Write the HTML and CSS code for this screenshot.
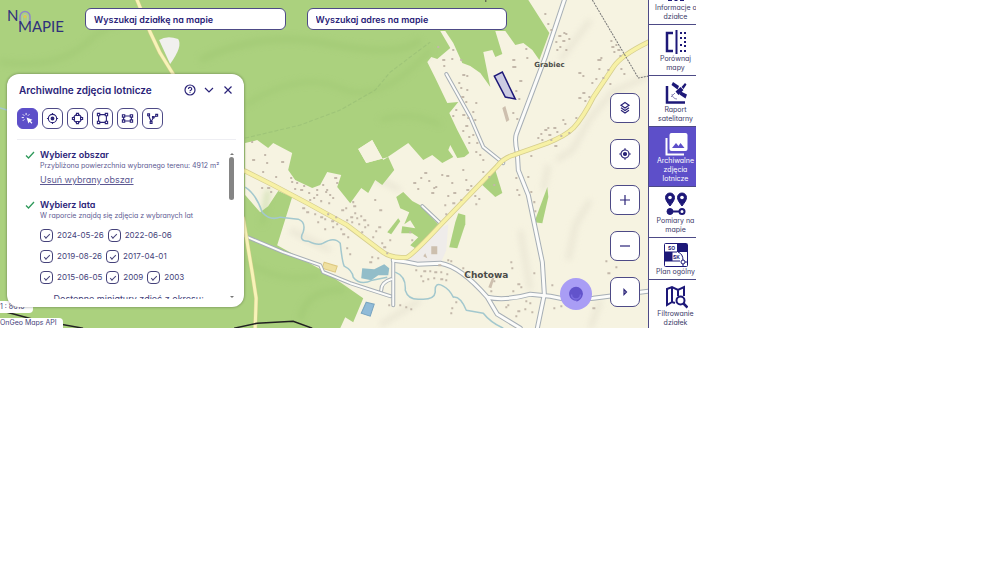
FILE: index.html
```html
<!DOCTYPE html>
<html lang="pl">
<head>
  <meta charset="UTF-8" />
  <meta name="viewport" content="width=device-width, initial-scale=1.0" />
  <title>Na Mapie</title>
  <link rel="stylesheet" href="styles.css">
</head>
<body>
  <div class="app">
    <main class="map">
      <svg class="map-canvas" viewBox="0 0 648 328" preserveAspectRatio="xMinYMin slice" aria-hidden="true">
        <defs>
          <filter id="soft" x="-20%" y="-20%" width="140%" height="140%"><feGaussianBlur stdDeviation="3" /></filter>
        </defs>
        <rect width="648" height="328" fill="#f6f3e1" />
        <!-- hill shading -->
        <g fill="none" stroke="#e6e2d0" stroke-width="5" filter="url(#soft)" opacity="0.8">
          <path d="M648 76L612 92 590 118 572 150 556 160" />
          <path d="M590 200L575 225 568 260M548 165L543 190M600 300L590 328M520 230L530 290" />
          <path d="M400 190L350 165M290 230L330 250M560 60L590 20M420 300L380 325" />
        </g>
        <!-- forests -->
        <g fill="#abd17e">
          <path d="M0 0H528L549 33 539 60 532 50 523 43 515 45 505 31H495L502 54 495 57 492 50 483 52 490 87 480 73 470 66 462 63 453 43 445 31H440L450 48 437 59 431 57 427 62 435 78 447 103 458 102 449 113 457 130 469 153 464 157 457 158 450 145 448 150 453 157 442 163 432 155 423 160 408 143 383 160 372 140 358 149 366 163 388 157 394 170 382 185 375 180 368 193 361 188 350 203 337 187 341 175 327 172 320 185 312 188 295 180 288 170 292 153 273 143 268 148 257 140 245 143V195L260 212 268 206 278 191 292 197 277 245 322 270 340 282 363 298 353 322 345 317 340 328H0Z" />
          <path d="M403 192L396 197 400 208 409 212 404 224 410 220 415 228 402 226 401 233 412 233 418 237 410 245 415 248 439 225 420 205 412 201Z" />
          <path d="M387 232L398 218 400 221 391 234Z" />
          <path d="M458 213L465 215 465 224 457 248 449 247 455 222Z" />
          <path d="M482 185L495 170 502 193 495 197Z" />
          <path d="M547 187L548 197 542 223 534 222Z" />
        </g>
        <path d="M366 163L388 157 383 160 372 140 358 149Z" fill="#f6f3e1" />
        <g fill="none" stroke="#9bc46f" filter="url(#soft)" opacity="0.5">
          <path d="M0 62Q60 70 90 40T200 20" stroke-width="5" />
          <path d="M200 60Q260 30 330 44T420 40" stroke-width="6" />
          <path d="M245 105Q300 70 340 88T430 50" stroke-width="4" />
          <path d="M300 320Q305 288 345 290" stroke-width="5" />
          <path d="M245 260Q280 285 320 275M268 190L262 225M380 120Q410 110 440 125" stroke-width="4" />
        </g>
        <path d="M245 138L300 125 340 110 375 90 390 72 430 42" fill="none" stroke="#92b873" stroke-width="1" stroke-dasharray="4 2" opacity="0.5" />
        <path d="M159 40Q167 35 178 39 183 46 170 64Z" fill="#f1f0ee" />
        <path d="M440 228L448 224 446 250 440 264 408 264 405 258 420 247Z" fill="#efecea" />
        <path d="M324 262L337 266 335 272 322 268Z" fill="#efe0a0" stroke="#ddc880" />
        <!-- water -->
        <g fill="none" stroke="#a3c8ce" stroke-width="1.5" stroke-linejoin="round">
          <path d="M0 108L7 110M245 187Q256 194 262 212 270 221 280 217L298 219Q306 222 303 232 298 241 308 241 318 246 323 243 334 236 340 243 342 262 344 266 352 270 353 277 360 286 372 280L387 277" />
          <path d="M395 272Q406 276 405 290 408 300 420 299 434 300 435 292 434 281 443 286 449 289 453 297 460 296 466 310L483 313Q490 322 503 328" />
        </g>
        <path d="M362 268L374 269 384 264 389 268 388 275 378 275 371 280 361 278Z" fill="#92bdc9" />
        <path d="M366 302L374 304 370 316 361 313Z" fill="#90bbd8" stroke="#78a4c0" />
        <!-- local roads: casing, then fill -->
        <g fill="none" stroke-linejoin="round" stroke-linecap="round">
          <g stroke="#a6aeb5" stroke-width="5">
            <path d="M564 0L545 57 516 134Q514 140 517 153L518 170 528 195 542 262 544 294 537 328" />
            <path d="M245 236L283 252 320 265 323 272 350 283 390 296M393 258V305M381 290Q381 282 391 279" stroke-width="4" />
            <path d="M393 260Q405 261 417 264L440 263Q460 266 487 297 505 301 530 294L550 296 570 300 593 298 648 291M487 297L497 314 520 328" />
            <path d="M446 74L470 117 483 147 503 163M422 206L440 223" stroke-width="4" />
          </g>
          <g stroke="#fcfcfa" stroke-width="3">
            <path d="M564 0L545 57 516 134Q514 140 517 153L518 170 528 195 542 262 544 294 537 328" />
            <path d="M245 236L283 252 320 265 323 272 350 283 390 296M393 258V305M381 290Q381 282 391 279" stroke-width="2" />
            <path d="M393 260Q405 261 417 264L440 263Q460 266 487 297 505 301 530 294L550 296 570 300 593 298 648 291M487 297L497 314 520 328" />
            <path d="M446 74L470 117 483 147 503 163M422 206L440 223" stroke-width="2" />
          </g>
          <path d="M245 171L273 185 307 203 347 225 380 250Q390 259 407 257 414 253 440 225L497 166Q503 158 513 155L547 143Q565 136 573 128 583 117 593 97L613 67Q621 55 648 42" stroke="#d5cd8e" stroke-width="5" />
          <path d="M245 171L273 185 307 203 347 225 380 250Q390 259 407 257 414 253 440 225L497 166Q503 158 513 155L547 143Q565 136 573 128 583 117 593 97L613 67Q621 55 648 42" stroke="#f7f1a5" stroke-width="3.5" />
          <path d="M137 0L150 32 160 53 173 74M243 218L252 272 256 298 255 328" stroke="#d6d08e" stroke-width="4" />
          <path d="M137 0L150 32 160 53 173 74M243 218L252 272 256 298 255 328" stroke="#f8f3b8" stroke-width="3" />
        </g>
        <!-- buildings -->
        <g fill="none" stroke="#c3b8aa" stroke-width="2">
          <path d="M251 142h2M252 160h3M264 155h2M266 163h2M281 162h3M262 172h2M261 188h2M267 188h3M270 192h2M275 177h2M290 178h2M291 182h2M294 189h2M296 183h2M300 190h3M303 186h2M302 208h3M306 212h3M308 193h2M309 200h2M313 198h2M316 190h2M316 195h2M320 201h2M325 192h2M328 203h2M329 195h2M332 198h2M334 178h3M336 183h2M326 190h2M322 185h2M341 210h3M345 208h2" />
          <path d="M314 214h2M317 222h2M320 217h3M324 219h2M324 229h2M327 214h2M331 221h3M332 227h2M335 217h2M336 224h2M340 229h2M342 234h3M346 220h2M347 237h2M350 217h3M351 222h2M353 206h3M354 213h2M356 218h2M358 224h2M360 216h2M361 232h2M363 220h3M364 227h2M367 225h2M372 237h2M375 231h2M378 227h3M381 243h2M383 247h3M389 240h2M374 200h2M379 210h3M352 202h2M346 248h2M349 254h2M371 257h2M369 262h3M377 258h2M386 253h2" />
          <path d="M413 183h3M417 189h2M420 178h2M424 173h3M428 181h2M433 188h2M431 193h3M435 187h2M441 175h2M446 176h3M451 183h2M453 193h3M447 196h2M444 205h2M452 203h3M462 170h2M465 180h2M466 190h3M470 186h2M460 200h2M474 196h2M475 204h2M478 199h2M488 177h2M493 185h2M482 172h2M445 214h2M409 232h2M411 240h2" />
          <path d="M437 47h2M442 60h3M443 66h2M452 50h2M451 59h2M460 60h2M462 75h3M466 76h2M458 83h2M460 88h2M466 90h2M461 97h3M465 102h2M455 110h2M462 115h3M467 118h2M465 126h3M462 131h2M468 137h2M472 112h2M475 103h2M474 120h2M472 135h2M476 143h2M479 155h2M468 143h2M482 160h2M452 116h2M475 152h2M512 60h3M512 67h4M519 81h3M526 58h2M525 49h2M515 91h2M518 99h2M512 113h2M516 119h2" />
          <path d="M555 42h2M558 36h3M559 47h2M563 33h2M562 41h3M565 34h2M565 50h2M568 39h2M556 50h2M544 14h2M547 24h2M550 30h2M578 73h3M582 76h2M597 60h4M600 58h2M598 69h2M607 70h2M610 41h2M611 47h3M613 52h2M615 45h2M617 50h3M619 56h2M620 69h2M623 74h2M609 84h2M602 78h2M578 98h3M582 93h3M584 101h2M588 97h2M591 83h2M595 79h2M562 120h2M564 124h2M575 118h2M568 133h2M540 134h2M544 130h3M541 140h2M548 135h3M550 140h2M553 128h3M556 132h2M537 138h2M547 128h2M530 156h2M554 146h3M560 136h2" />
          <path d="M415 270h2M423 271h3M420 276h2M429 271h2M434 272h3M433 278h2M440 272h2M440 279h3M446 274h2M445 280h2M422 281h2M427 279h2M438 265h3M447 260h2M450 261h2M462 268h2M493 281h2M496 277h2M490 291h2M510 262h2M511 268h2M512 291h2M517 284h3M520 287h2M525 301h2M529 303h2M524 309h2M517 311h3M515 316h2M505 307h2M507 305h2M531 312h2M533 273h2M399 305h2M405 307h2M388 305h2M410 309h2M451 308h2M450 313h2M455 302h2M530 192h2M533 202h2M534 211h2M551 285h2M553 308h2M560 306h2M592 308h3M607 273h3M615 267h2M518 195h2M516 190h2M515 178h2M527 177h2M605 261h2" />
        </g>
        <path d="M502 108L505 106 509 120 506 122ZM431 246L437 246 437 254 431 254ZM423 256L425 253 427 258ZM488 287L492 277 494 278 491 288Z" fill="#cdbfae" />
        <path d="M485 1h1" stroke="#444" stroke-width="2" />
        <path d="M592 0L638 78 648 76" fill="none" stroke="#777" stroke-width="1" stroke-dasharray="2 1" />
        <path d="M7 312L33 319 83 328M234 328L257 323 293 321 312 328" fill="none" stroke="#222" stroke-width="1.5" />
        <path d="M494 76L502 72 515 99 505 97Z" fill="#cccbe2" stroke="#1d1878" stroke-width="1.5" />
        <text class="map-village" x="534" y="67">Grabiec</text>
        <text class="map-town" x="464" y="278">Chotowa</text>
      </svg>

      <span class="scale">1 : 8610</span>
      <a class="attribution" href="#">OnGeo Maps API</a>

      <header class="topbar">
        <a class="logo" href="#" aria-label="Na Mapie">
          <span class="logo-top">N<svg width="14" height="14" viewBox="0 0 14 14"><path d="M2 14V6.500a5 5 0 0 1 10 0V14" fill="none" stroke="#8f86c9" stroke-width="1.500" /><path d="M4.500 14V7a2.500 2.500 0 0 1 5 0v7" fill="none" stroke="#b4c9a8" stroke-width="1" /><circle cx="7" cy="6.500" r="1.500" fill="#e2c54d" /></svg></span>
          <span class="logo-bottom">MAPIE</span>
        </a>
        <input class="search" type="text" placeholder="Wyszukaj działkę na mapie" aria-label="Wyszukaj działkę na mapie">
        <input class="search" type="text" placeholder="Wyszukaj adres na mapie" aria-label="Wyszukaj adres na mapie">
      </header>

      <div class="workspace">
        <section class="panel">
          <div class="panel-header">
            <h2>Archiwalne zdjęcia lotnicze</h2>
            <button class="icon-button" type="button" aria-label="Pomoc">
              <svg viewBox="0 0 12 12"><circle cx="6" cy="6" r="5" /><path d="M4.500 5a1.600 1.600 0 1 1 2.300 1.300Q6 6.600 6 7.200M6 8.300v.8" /></svg>
            </button>
            <button class="icon-button" type="button" aria-label="Zwiń">
              <svg viewBox="0 0 12 12"><path d="M2 4l4 4 4-4" /></svg>
            </button>
            <button class="icon-button" type="button" aria-label="Zamknij">
              <svg viewBox="0 0 12 12"><path d="M2.500 2.500l7 7M9.500 2.500l-7 7" /></svg>
            </button>
          </div>

          <div class="tools">
            <button class="tool active" type="button" aria-label="Wskaż działkę">
              <svg viewBox="0 0 14 14"><path d="M6 6l2 6.500 1.300-2 2 2.200 1-1-2-2.100 2-1.300z" fill="currentColor" stroke="none" /><path d="M5.500 1v2.300M2 2.500l1.600 1.600M.8 6h2.300M2 9.500l1.600-1.600M9 2.500L7.500 4" stroke-width="1" /></svg>
            </button>
            <button class="tool" type="button" aria-label="Punkt">
              <svg viewBox="0 0 14 14"><circle cx="7" cy="7" r="4.500" /><circle cx="7" cy="7" r="1.500" fill="currentColor" /><path d="M7 1v1.500M7 11.500V13M1 7h1.500M11.500 7H13" /></svg>
            </button>
            <button class="tool" type="button" aria-label="Okrąg">
              <svg viewBox="0 0 14 14"><circle cx="7" cy="7" r="4.200" /><path class="nodes" d="M5.900 1.500h2.200v2.200H5.900zM5.900 10.300h2.200v2.200H5.900zM1.500 5.900h2.200v2.200H1.500zM10.300 5.900h2.200v2.200h-2.200z" /></svg>
            </button>
            <button class="tool" type="button" aria-label="Kwadrat">
              <svg viewBox="0 0 14 14"><path d="M4 2.800h6M4 11.200h6M2.800 4v6M11.200 4v6" /><path class="nodes" d="M1.500 1.500H4V4H1.500zM10 1.500h2.500V4H10zM1.500 10H4v2.500H1.500zM10 10h2.500v2.500H10z" /></svg>
            </button>
            <button class="tool" type="button" aria-label="Prostokąt">
              <svg viewBox="0 0 14 14"><path d="M4 4.300h6M4 9.700h6M2.800 5v4M11.200 5v4" /><path class="nodes" d="M1.500 3h2.500v2.500H1.500zM10 3h2.500v2.500H10zM1.500 8.500H4V11H1.500zM10 8.500h2.500V11H10z" /></svg>
            </button>
            <button class="tool" type="button" aria-label="Wielokąt">
              <svg viewBox="0 0 14 14"><path d="M3 4l2.500 6.500L8 6l3.500-2" /><path class="nodes" d="M1.800 2h2v2h-2zM4.500 10.200h2v2h-2zM7 5h1.500v1.500H7zM10.500 2.600h2v2h-2z" /></svg>
            </button>
          </div>

          <div class="panel-body">
            <div class="steps">
              <div class="step">
                <svg class="done" viewBox="0 0 10 10"><path d="M1 5.500l2.500 2.500L9 2" /></svg>
                <div class="step-content">
                  <h3>Wybierz obszar</h3>
                  <p>Przybliżona powierzchnia wybranego terenu: 4912 m²</p>
                  <a class="clear-area" href="#">Usuń wybrany obszar</a>
                </div>
              </div>
              <div class="step">
                <svg class="done" viewBox="0 0 10 10"><path d="M1 5.500l2.500 2.500L9 2" /></svg>
                <div class="step-content">
                  <h3>Wybierz lata</h3>
                  <p>W raporcie znajdą się zdjęcia z wybranych lat</p>
                  <div class="years">
                    <label><input type="checkbox" checked>2024-05-26</label>
                    <label><input type="checkbox" checked>2022-06-06</label>
                    <label><input type="checkbox" checked>2019-08-26</label>
                    <label><input type="checkbox" checked>2017-04-01</label>
                    <label><input type="checkbox" checked>2015-06-05</label>
                    <label><input type="checkbox" checked>2009</label>
                    <label><input type="checkbox" checked>2003</label>
                  </div>
                  <div class="thumbs"><span>–</span>Dostępne miniatury zdjęć z okresu:</div>
                </div>
              </div>
            </div>
            <div class="scrollbar" aria-hidden="true">
              <svg viewBox="0 0 6 4"><path d="M1 3h4L3 1z" /></svg>
              <span class="thumb"></span>
              <svg class="down" viewBox="0 0 6 4"><path d="M1 1h4L3 3z" /></svg>
            </div>
          </div>
        </section>

        <nav class="controls" aria-label="Sterowanie mapą">
          <button type="button" aria-label="Warstwy">
            <svg viewBox="0 0 14 14"><path d="M7 1.500l4 2.700L7 7 3 4.200zM3 6.800l4 2.700 4-2.700M3 9.300L7 12l4-2.700" /></svg>
          </button>
          <button type="button" aria-label="Moja lokalizacja">
            <svg viewBox="0 0 14 14"><circle cx="7" cy="7" r="4" /><circle cx="7" cy="7" r="1.500" fill="currentColor" /><path d="M7 1.200V3M7 11v1.800M1.200 7H3M11 7h1.800" /></svg>
          </button>
          <button type="button" aria-label="Przybliż">
            <svg viewBox="0 0 14 14"><path d="M2 7h10M7 2v10" /></svg>
          </button>
          <button type="button" aria-label="Oddal">
            <svg viewBox="0 0 14 14"><path d="M2 7h10" /></svg>
          </button>
          <button type="button" aria-label="Rozwiń">
            <svg viewBox="0 0 14 14"><path d="M6 4.500v5L8.500 7z" /></svg>
          </button>
        </nav>
      </div>

      <button class="chat" type="button" aria-label="Czat">
        <svg viewBox="0 0 16 16"><path d="M8 .8a7 7 0 0 0-2 13.700q1.500.3 2.500 0v1.200q5.500-2.200 6.500-7.700A7 7 0 0 0 8 .8z" fill="#6253cb" /><path d="M3.500 8.500a4.500 4.500 0 0 0 9 0" fill="none" stroke="#7a6cdf" stroke-width="1.500" /></svg>
      </button>
    </main>

    <nav class="sidebar" aria-label="Narzędzia">
      <a href="#">
        <svg viewBox="0 0 24 24"><path d="M4 3h4M12 3h8" stroke-width="3" /><path d="M4 20.500h4M10.500 20.500h3M18 18v4M16 20.500h4" stroke-width="3" /></svg>
        Informacje&nbsp;o działce
      </a>
      <a href="#">
        <svg viewBox="0 0 24 24"><path d="M9 3H3v18h6" stroke-width="2.500" /><path d="M12.500 0v24" stroke-width="2" /><path d="M16 3h2M20 3h2M21 7v2M21 11v2M21 15v2M16 21h2M20 21h2M16 8h2M16 15h2" stroke-width="2" /></svg>
        Porównaj<br>mapy
      </a>
      <a href="#">
        <svg viewBox="0 0 24 24"><path d="M3 5v16.500h18" stroke-width="2.500" /><path d="M9 1l6 4-1.500 3.500-6-4.500zM17 10.500l6 3-1.500 4-6-4z" fill="currentColor" stroke="none" /><path d="M11.500 10.500l5-4.500 3 3-5 5zM17.500 6L21 2l1.500 1.500L19.500 8z" fill="currentColor" stroke="none" /><path d="M8 13a5 5 0 0 0 5 5M7 16l4-4" stroke="#8c88b8" /></svg>
        Raport satelitarny
      </a>
      <a href="#" class="active">
        <svg viewBox="0 0 24 24"><path d="M2.500 6v16.500H20" stroke-width="2" /><rect x="5.500" y="1" width="18" height="18" rx="2" fill="currentColor" stroke="none" /><path d="M8 16l4-5 2.500 3 2-3 4 5z" fill="#5d4fc9" stroke="none" /></svg>
        Archiwalne zdjęcia lotnicze
      </a>
      <a href="#">
        <svg viewBox="0 0 24 24"><path d="M6 14C3 10 1.500 8 1.500 5.500a4.500 4.500 0 0 1 9 0C10.500 8 9 10 6 14zM18 14c-3-4-4.500-6-4.500-8.500a4.500 4.500 0 0 1 9 0C22.500 8 21 10 18 14z" fill="currentColor" /><g fill="#fff" stroke="none"><circle cx="6" cy="5.500" r="1.800" /><circle cx="18" cy="5.500" r="1.800" /></g><circle cx="6" cy="19.500" r="3" fill="currentColor" /><path d="M8 19.500h8" stroke-width="2" /><circle cx="18" cy="19.500" r="2.500" fill="#fff" stroke-width="2" /></svg>
        Pomiary na mapie
      </a>
      <a href="#">
        <svg viewBox="0 0 24 24"><rect x=".5" y=".5" width="23" height="23" rx="1" fill="#fff" /><path d="M13 1h10v8H13zM1 9h7v9H1z" fill="currentColor" stroke="none" /><path d="M1 9h12M8 9v9M1 18h15M14 9q5 2 5 8M19 21v3M21 19h3" /><circle cx="19" cy="19" r="2" fill="#fff" /><text x="4" y="7" class="zone">SO</text><text x="9" y="16" class="zone">SK</text></svg>
        Plan ogólny
      </a>
      <a href="#">
        <svg viewBox="0 0 24 24"><path d="M11 18l-3-1-5 3V4l5-2 6 3 6-3v9M8 2v15M14 5v6" stroke-width="2" /><circle cx="16.500" cy="15.500" r="4" stroke-width="2" /><path d="M19.500 18.500l4 4" stroke-width="2.500" /></svg>
        Filtrowanie działek
      </a>
    </nav>
  </div>
</body>
</html>
```
FILE: styles.css
```css
body, html {
  height: 100%;
  margin: 0;
  background: #fff;
  font-family: Inter, "Open Sans", sans-serif;
  font-feature-settings: "cv11";
  color: #2a2378;
}
button, input {
  font: inherit;
  font-feature-settings: inherit;
  color: inherit;
}
.app {
  display: flex;
  width: 69.6%;
  height: 58.4vh;
  overflow: hidden;
}
.map {
  position: relative;
  display: flex;
  flex: 1;
  flex-direction: column;
  min-width: 0;
  overflow: hidden;
}
.map-canvas {
  position: absolute;
  inset: 0;
  width: 100%;
  height: 100%;
}
.map-village, .map-town {
  font-family: "DejaVu Sans", sans-serif;
  font-weight: bold;
  fill: #4a4a48;
  stroke: #f6f3e1;
  stroke-width: 1px;
  paint-order: stroke;
}
.map-village {
  font-size: 7px;
}
.map-town {
  font-size: 9px;
}
.scale, .attribution {
  position: absolute;
  left: 0;
  background: #fff;
  font-size: 7px;
  line-height: 12px;
  text-decoration: none;
  color: #45427a;
}
.scale {
  bottom: 15px;
  padding-right: 8px;
  border-radius: 0 4px 4px 0;
}
.attribution {
  bottom: 0;
  padding-right: 6px;
  line-height: 10px;
  border-radius: 0 4px 0 0;
}
.topbar {
  position: relative;
  display: flex;
  gap: 21px;
  padding: 8px 141px 0 7px;
}
.logo {
  display: flex;
  flex-direction: column;
  width: 57px;
  font-family: Lato, sans-serif;
  font-size: 15px;
  line-height: 11px;
  text-decoration: none;
  color: #2f2f7c;
}
.logo-top {
  display: flex;
  height: 11px;
  padding-top: 2px;
}
.logo-bottom {
  padding-left: 11px;
}
.search {
  flex: 1;
  min-width: 0;
  height: 22px;
  padding: 0 8px;
  box-sizing: border-box;
  border: 1px solid #4d4a86;
  border-radius: 6px;
  background: #fff;
  font-size: 9px;
  font-weight: 600;
}
.search::placeholder {
  color: #2a2378;
  opacity: 1;
}
.workspace {
  position: relative;
  display: flex;
  flex: 1;
  justify-content: space-between;
  min-height: 0;
  padding: 42px 8px 21px 7px;
}
.panel {
  display: flex;
  flex-direction: column;
  width: 237px;
  padding: 8px 8px 8px 10px;
  box-sizing: border-box;
  border-radius: 12px;
  background: #fff;
  box-shadow: 0 0 3px rgba(0, 0, 0, 0.4);
}
.panel-header {
  display: flex;
  align-items: center;
  gap: 7px;
  padding: 2px 2px 12px;
}
.panel-header h2 {
  flex: 1;
  margin: 0;
  font-size: 10px;
  line-height: 12px;
  font-weight: 600;
}
.icon-button {
  width: 12px;
  height: 12px;
  padding: 0;
  border: none;
  background: none;
  cursor: pointer;
}
.icon-button svg, .tool svg, .controls svg, .chat svg {
  display: block;
  width: 100%;
  fill: none;
  stroke: currentColor;
  stroke-width: 1.2;
}
.tools {
  display: flex;
  gap: 4px;
  padding-bottom: 10px;
  border-bottom: 1px solid #eeeef3;
}
.tool {
  width: 21px;
  height: 21px;
  padding: 3px;
  border: 1px solid #4d4a86;
  border-radius: 6px;
  background: #fff;
  cursor: pointer;
}
.tool.active {
  border-color: #5d4fc9;
  background: #5d4fc9;
  color: #fff;
}
.tool .nodes {
  fill: #fff;
}
.panel-body {
  display: flex;
  flex: 1;
  min-height: 0;
  padding-top: 9px;
}
.steps {
  flex: 1;
  overflow: hidden;
}
.step {
  display: flex;
  gap: 5px;
  padding: 0 0 13px 8px;
}
.done {
  flex: none;
  width: 10px;
  height: 12px;
  fill: none;
  stroke: #2f9a5b;
  stroke-width: 1.3;
}
.step h3 {
  margin: 0;
  font-size: 9px;
  line-height: 12px;
  font-weight: 600;
}
.step p {
  margin: 0;
  font-size: 7px;
  line-height: 10px;
  color: #5d5992;
  white-space: nowrap;
}
.clear-area {
  display: block;
  margin-top: 3px;
  font-size: 9px;
  line-height: 12px;
  color: #5d5992;
}
.years {
  display: flex;
  flex-wrap: wrap;
  gap: 8px 4px;
  padding-top: 8px;
}
.years label {
  display: flex;
  align-items: center;
  gap: 4px;
  font-size: 8px;
  line-height: 13px;
  color: #45427a;
}
.years input {
  appearance: none;
  width: 13px;
  height: 13px;
  margin: 0;
  box-sizing: border-box;
  border: 1px solid #45427a;
  border-radius: 4px;
  display: grid;
  place-items: center;
}
.years input:checked::before {
  content: "";
  width: 5px;
  height: 2px;
  border: solid #45427a;
  border-width: 0 0 1px 1px;
  transform: rotate(-45deg);
}
.thumbs {
  display: flex;
  gap: 7px;
  padding: 8px 0 0 2px;
  font-size: 9px;
  line-height: 13px;
  color: #45427a;
  white-space: nowrap;
}
.scrollbar {
  display: flex;
  flex-direction: column;
  width: 7px;
  padding-top: 3px;
}
.scrollbar svg {
  width: 6px;
  height: 4px;
  fill: #777;
}
.scrollbar .thumb {
  width: 5px;
  height: 43px;
  margin-top: 1px;
  border-radius: 3px;
  background: #858585;
}
.scrollbar .down {
  margin-top: auto;
}
.controls {
  display: flex;
  flex-direction: column;
  align-self: flex-end;
  gap: 16px;
}
.controls button {
  width: 30px;
  height: 30px;
  padding: 7px;
  border: 1px solid #4d4a86;
  border-radius: 7px;
  background: #fff;
  cursor: pointer;
}
.chat {
  position: absolute;
  right: 56px;
  bottom: 18px;
  width: 32px;
  height: 32px;
  padding: 8px;
  border: none;
  border-radius: 50%;
  background: #a99df5;
  cursor: pointer;
}
.chat svg {
  stroke: none;
}
.sidebar {
  display: flex;
  flex-direction: column;
  justify-content: flex-end;
  width: 48px;
  box-sizing: border-box;
  border-left: 1px solid #4d4a86;
  background: #fff;
}
.sidebar a {
  padding: 5px 0 3px 6px;
  border-top: 1px solid #4d4a86;
  font-size: 7px;
  line-height: 9px;
  text-align: center;
  text-decoration: none;
  color: #3b3867;
}
.sidebar a:last-child {
  padding-bottom: 1px;
}
.sidebar a.active {
  background: #5d4fc9;
  color: #fff;
}
.sidebar svg {
  display: block;
  width: 24px;
  height: 24px;
  margin: 0 auto;
  fill: none;
  stroke: currentColor;
  color: #1d1878;
}
.sidebar .active svg {
  color: #fff;
}
.zone {
  font-size: 5px;
  font-weight: bold;
  fill: #1d1878;
  stroke: none;
}
.tool:hover, .controls button:hover {
  background-color: #efedff;
}
.tool.active:hover {
  background-color: #4d40b5;
}
```
